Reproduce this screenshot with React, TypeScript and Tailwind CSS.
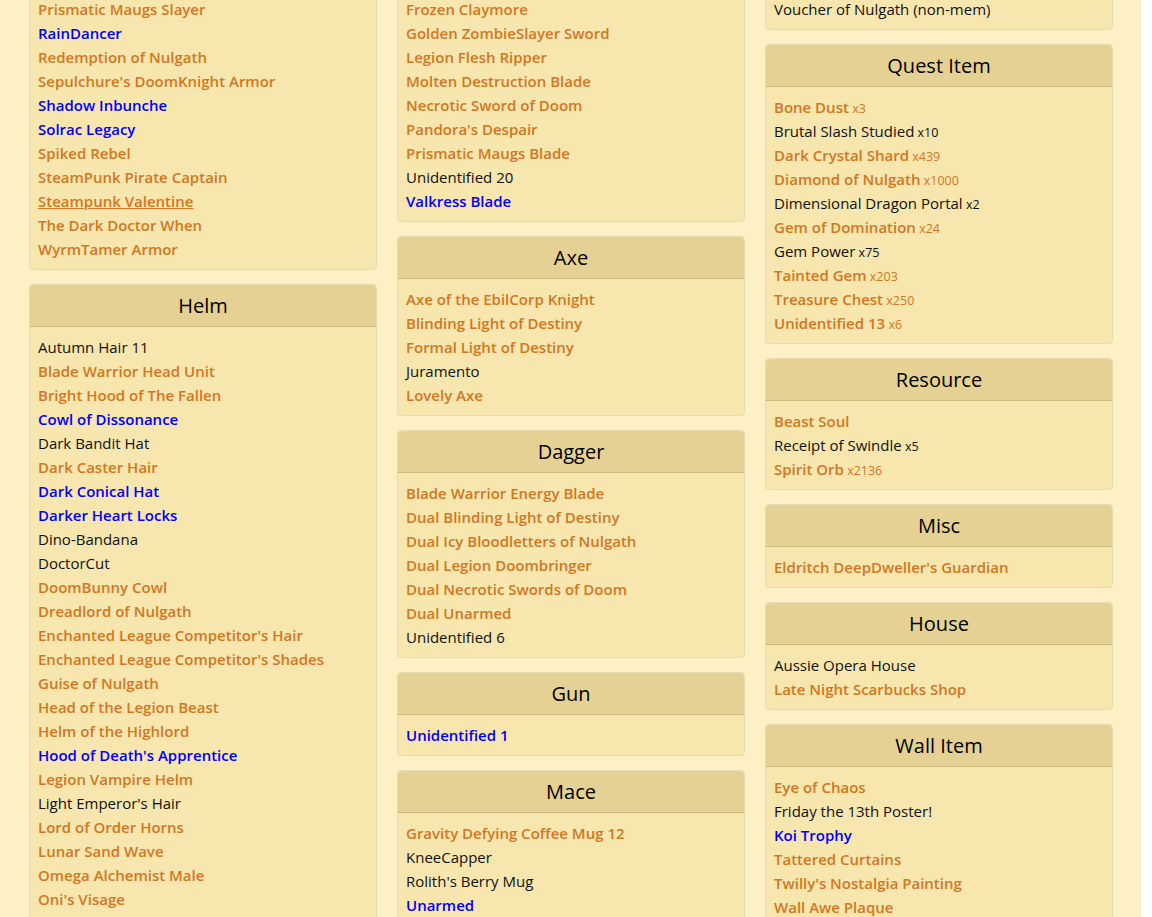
type It = [string, "o" | "b" | "k", string?, boolean?];
const O = "o", B = "b", K = "k";

const col1: { t?: string; items: It[] }[] = [
  { items: [["Prismatic Maugs Slayer", O], ["RainDancer", B], ["Redemption of Nulgath", O], ["Sepulchure's DoomKnight Armor", O], ["Shadow Inbunche", B], ["Solrac Legacy", B], ["Spiked Rebel", O], ["SteamPunk Pirate Captain", O], ["Steampunk Valentine", O, undefined, true], ["The Dark Doctor When", O], ["WyrmTamer Armor", O]] },
  { t: "Helm", items: [["Autumn Hair 11", K], ["Blade Warrior Head Unit", O], ["Bright Hood of The Fallen", O], ["Cowl of Dissonance", B], ["Dark Bandit Hat", K], ["Dark Caster Hair", O], ["Dark Conical Hat", B], ["Darker Heart Locks", B], ["Dino-Bandana", K], ["DoctorCut", K], ["DoomBunny Cowl", O], ["Dreadlord of Nulgath", O], ["Enchanted League Competitor's Hair", O], ["Enchanted League Competitor's Shades", O], ["Guise of Nulgath", O], ["Head of the Legion Beast", O], ["Helm of the Highlord", O], ["Hood of Death's Apprentice", B], ["Legion Vampire Helm", O], ["Light Emperor's Hair", K], ["Lord of Order Horns", O], ["Lunar Sand Wave", O], ["Omega Alchemist Male", O], ["Oni's Visage", O], ["Pirate Hat", O]] },
];
const col2: { t?: string; items: It[] }[] = [
  { items: [["Frozen Claymore", O], ["Golden ZombieSlayer Sword", O], ["Legion Flesh Ripper", O], ["Molten Destruction Blade", O], ["Necrotic Sword of Doom", O], ["Pandora's Despair", O], ["Prismatic Maugs Blade", O], ["Unidentified 20", K], ["Valkress Blade", B]] },
  { t: "Axe", items: [["Axe of the EbilCorp Knight", O], ["Blinding Light of Destiny", O], ["Formal Light of Destiny", O], ["Juramento", K], ["Lovely Axe", O]] },
  { t: "Dagger", items: [["Blade Warrior Energy Blade", O], ["Dual Blinding Light of Destiny", O], ["Dual Icy Bloodletters of Nulgath", O], ["Dual Legion Doombringer", O], ["Dual Necrotic Swords of Doom", O], ["Dual Unarmed", O], ["Unidentified 6", K]] },
  { t: "Gun", items: [["Unidentified 1", B]] },
  { t: "Mace", items: [["Gravity Defying Coffee Mug 12", O], ["KneeCapper", K], ["Rolith's Berry Mug", K], ["Unarmed", B], ["Zealous Mace", O]] },
];
const col3: { t?: string; items: It[] }[] = [
  { items: [["Voucher of Nulgath (non-mem)", K]] },
  { t: "Quest Item", items: [["Bone Dust", O, "x3"], ["Brutal Slash Studied", K, "x10"], ["Dark Crystal Shard", O, "x439"], ["Diamond of Nulgath", O, "x1000"], ["Dimensional Dragon Portal", K, "x2"], ["Gem of Domination", O, "x24"], ["Gem Power", K, "x75"], ["Tainted Gem", O, "x203"], ["Treasure Chest", O, "x250"], ["Unidentified 13", O, "x6"]] },
  { t: "Resource", items: [["Beast Soul", O], ["Receipt of Swindle", K, "x5"], ["Spirit Orb", O, "x2136"]] },
  { t: "Misc", items: [["Eldritch DeepDweller's Guardian", O]] },
  { t: "House", items: [["Aussie Opera House", K], ["Late Night Scarbucks Shop", O]] },
  { t: "Wall Item", items: [["Eye of Chaos", O], ["Friday the 13th Poster!", K], ["Koi Trophy", B], ["Tattered Curtains", O], ["Twilly's Nostalgia Painting", O], ["Wall Awe Plaque", O], ["Wall Item", O]] },
];

function Row({ it }: { it: It }) {
  const [n, c, q, u] = it;
  const cls = c === "o" ? "text-[#d2771f] font-semibold" : c === "b" ? "text-[#0000ff] font-semibold" : "text-[#111] font-normal";
  return (
    <div className="h-6 leading-6 whitespace-nowrap">
      <span className={cls + (u ? " underline" : "")}>{n}</span>
      {q && <span className={(c === "o" ? "text-[#d2771f]" : "text-[#111]") + " text-[12.5px] font-normal"}> {q}</span>}
    </div>
  );
}

function Col({ cards }: { cards: { t?: string; items: It[] }[] }) {
  return (
    <div className="flex flex-col gap-[14px]">
      {cards.map((c, i) => (
        <div key={i} className={"bg-[#f7e6ae] border border-[#e6dcb4] rounded " + (i === 0 ? "-mt-[12px]" : "")}>
          {c.t && <div className="h-[42px] flex items-center justify-center bg-[#e5d193] border-b border-[#cdb97c] text-[20px] text-black rounded-t">{c.t}</div>}
          <div className="px-2 py-2">
            {c.items.map((it, j) => <Row key={j} it={it} />)}
          </div>
        </div>
      ))}
    </div>
  );
}

export default function App() {
  return (
    <div className="h-[917px] overflow-hidden flex bg-white" style={{ fontFamily: "'Open Sans', 'Noto Sans', sans-serif" }}>
      <div className="w-[1141px] bg-[#fdf0c4] text-[15px] grid grid-cols-[348px_348px_348px] gap-x-5 pl-[29px] items-start">
        <Col cards={col1} />
        <Col cards={col2} />
        <Col cards={col3} />
      </div>
    </div>
  );
}
